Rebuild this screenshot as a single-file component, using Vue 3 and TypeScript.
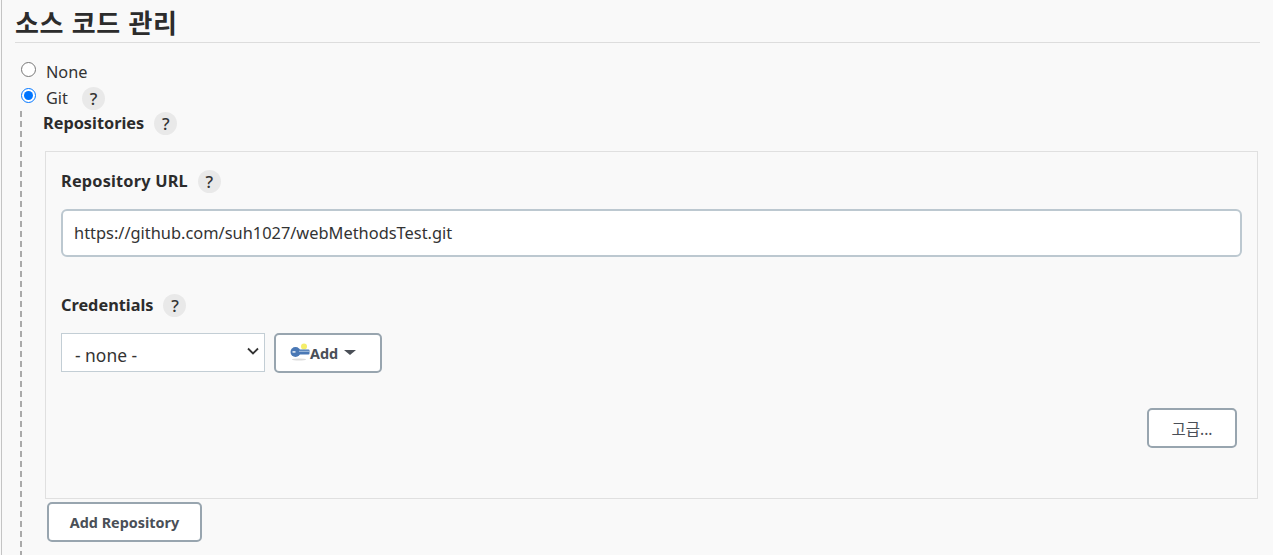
<script setup lang="ts">
import { ref } from 'vue';

const scm = ref('git');
const repoUrl = ref('https://github.com/suh1027/webMethodsTest.git');
</script>

<template>
  <div class="page">
    <h2 class="title">소스 코드 관리</h2>

    <label class="radio-row first">
      <input v-model="scm" class="radio" type="radio" value="none" />
      <span>None</span>
    </label>
    <label class="radio-row">
      <input v-model="scm" class="radio" type="radio" value="git" />
      <span>Git</span>
      <span class="help git-help">?</span>
    </label>

    <div class="git-block">
      <div class="field-label repos-label">
        <span>Repositories</span>
        <span class="help">?</span>
      </div>

      <div class="repo-box">
        <div class="field-label url-label">
          <span>Repository URL</span>
          <span class="help">?</span>
        </div>
        <input v-model="repoUrl" class="url-input" type="text" />

        <div class="field-label cred-label">
          <span>Credentials</span>
          <span class="help">?</span>
        </div>
        <div class="cred-row">
          <div class="select">
            <span>- none -</span>
            <svg class="chevron" viewBox="0 0 12 8" width="12" height="8">
              <path d="M1 1.5l5 5 5-5" fill="none" stroke="#333" stroke-width="1.8" />
            </svg>
          </div>
          <button class="btn add-btn" type="button">
            <svg class="key" viewBox="0 0 20 18" width="20" height="18">
              <ellipse cx="9" cy="16.5" rx="7" ry="1" fill="#ddd" />
              <circle cx="14" cy="3.5" r="3" fill="#f5ee6a" />
              <circle cx="5.5" cy="9" r="5" fill="#4a78b5" />
              <rect x="8" y="6.6" width="11.5" height="4.8" rx="1" fill="#4a78b5" />
              <rect x="2.5" y="8" width="3" height="1.8" fill="#cfdcec" />
              <rect x="9" y="7.8" width="10" height="1" fill="#a9c2df" />
            </svg>
            <span>Add</span>
            <span class="caret"></span>
          </button>
        </div>

        <div class="advanced-row">
          <button class="btn advanced-btn" type="button">고급...</button>
        </div>
      </div>

      <button class="btn add-repo" type="button">Add Repository</button>
    </div>
  </div>
</template>

<style>
html,
body {
  margin: 0;
  background: #f9f9f9;
}
</style>

<style scoped>
.page {
  box-sizing: border-box;
  height: 555px;
  overflow: hidden;
  margin-left: 1px;
  padding: 5px 13px 0 13px;
  border-left: 1px solid #c4c4c4;
  background: #f9f9f9;
  color: #333;
  font-family: 'Noto Sans', 'Noto Sans CJK KR', sans-serif;
  font-size: 16.3px;
}

.title {
  margin: 0;
  height: 37px;
  border-bottom: 1px solid #ddd;
  color: #2c2c2c;
  font-size: 26px;
  font-weight: 700;
  line-height: 37px;
  letter-spacing: 0.7px;
}

.radio-row {
  display: flex;
  align-items: center;
  height: 26px;
  margin-left: 6px;
}

.radio-row.first {
  margin-top: 16px;
}

.radio {
  width: 15px;
  height: 15px;
  margin: 0 10px 5px 0;
  accent-color: #0075ff;
}

.help {
  display: inline-flex;
  align-items: center;
  justify-content: center;
  width: 23px;
  height: 23px;
  margin-left: 10px;
  border-radius: 50%;
  background: #e9e9e9;
  color: #333;
  font-size: 17px;
  font-weight: 500;
}

.git-help {
  margin-left: 14px;
}

.git-block {
  box-sizing: border-box;
  height: 446px;
  margin-left: 5px;
  padding: 0 0 0 23px;
  background: repeating-linear-gradient(to bottom, #aaa 0 6px, transparent 6px 10px) 0 0 / 2px 100% no-repeat;
}

.field-label {
  display: flex;
  align-items: center;
  height: 24px;
  color: #2c2c2c;
  font-size: 16.3px;
  font-weight: 700;
}

.url-label {
  letter-spacing: 0.2px;
}

.repos-label {
  margin-bottom: 16px;
}

.repo-box {
  box-sizing: border-box;
  width: 1213px;
  height: 348px;
  margin-left: 2px;
  padding: 17px 15px 0;
  border: 1px solid #e0e0e0;
}

.url-input {
  display: block;
  box-sizing: border-box;
  width: 1181px;
  height: 48px;
  margin-top: 16px;
  padding: 0 11px 2px;
  border: 2px solid #bcc8d0;
  border-radius: 6px;
  background: #fff;
  color: #333;
  font-family: inherit;
  font-size: 16.4px;
  outline: none;
}

.cred-label {
  margin-top: 36px;
}

.cred-row {
  display: flex;
  gap: 9px;
  margin-top: 16px;
}

.select {
  box-sizing: border-box;
  display: flex;
  align-items: center;
  justify-content: space-between;
  width: 204px;
  height: 39px;
  padding: 5px 5px 0 13px;
  border: 1px solid #c3ced5;
  background: #fff;
  font-size: 17.4px;
}

.chevron {
  margin-top: -8px;
}

.btn {
  box-sizing: border-box;
  height: 40px;
  border: 2px solid #98a5af;
  border-radius: 5px;
  background: #fff;
  color: #4a4f57;
  font-family: inherit;
  font-size: 14.4px;
  font-weight: 700;
}

.add-btn {
  display: flex;
  align-items: center;
  width: 108px;
  padding: 0 0 0 14px;
}

.key {
  flex: none;
  margin-top: -2px;
}

.caret {
  width: 0;
  height: 0;
  margin: 0 0 2px 6px;
  border-left: 6px solid transparent;
  border-right: 6px solid transparent;
  border-top: 5px solid #4a4f57;
}

.advanced-row {
  display: flex;
  justify-content: flex-end;
  margin-top: 35px;
  padding-right: 5px;
}

.advanced-btn {
  width: 90px;
  font-size: 15.5px;
  font-weight: 400;
}

.add-repo {
  display: block;
  width: 155px;
  margin: 3px 0 0 4px;
}
</style>
